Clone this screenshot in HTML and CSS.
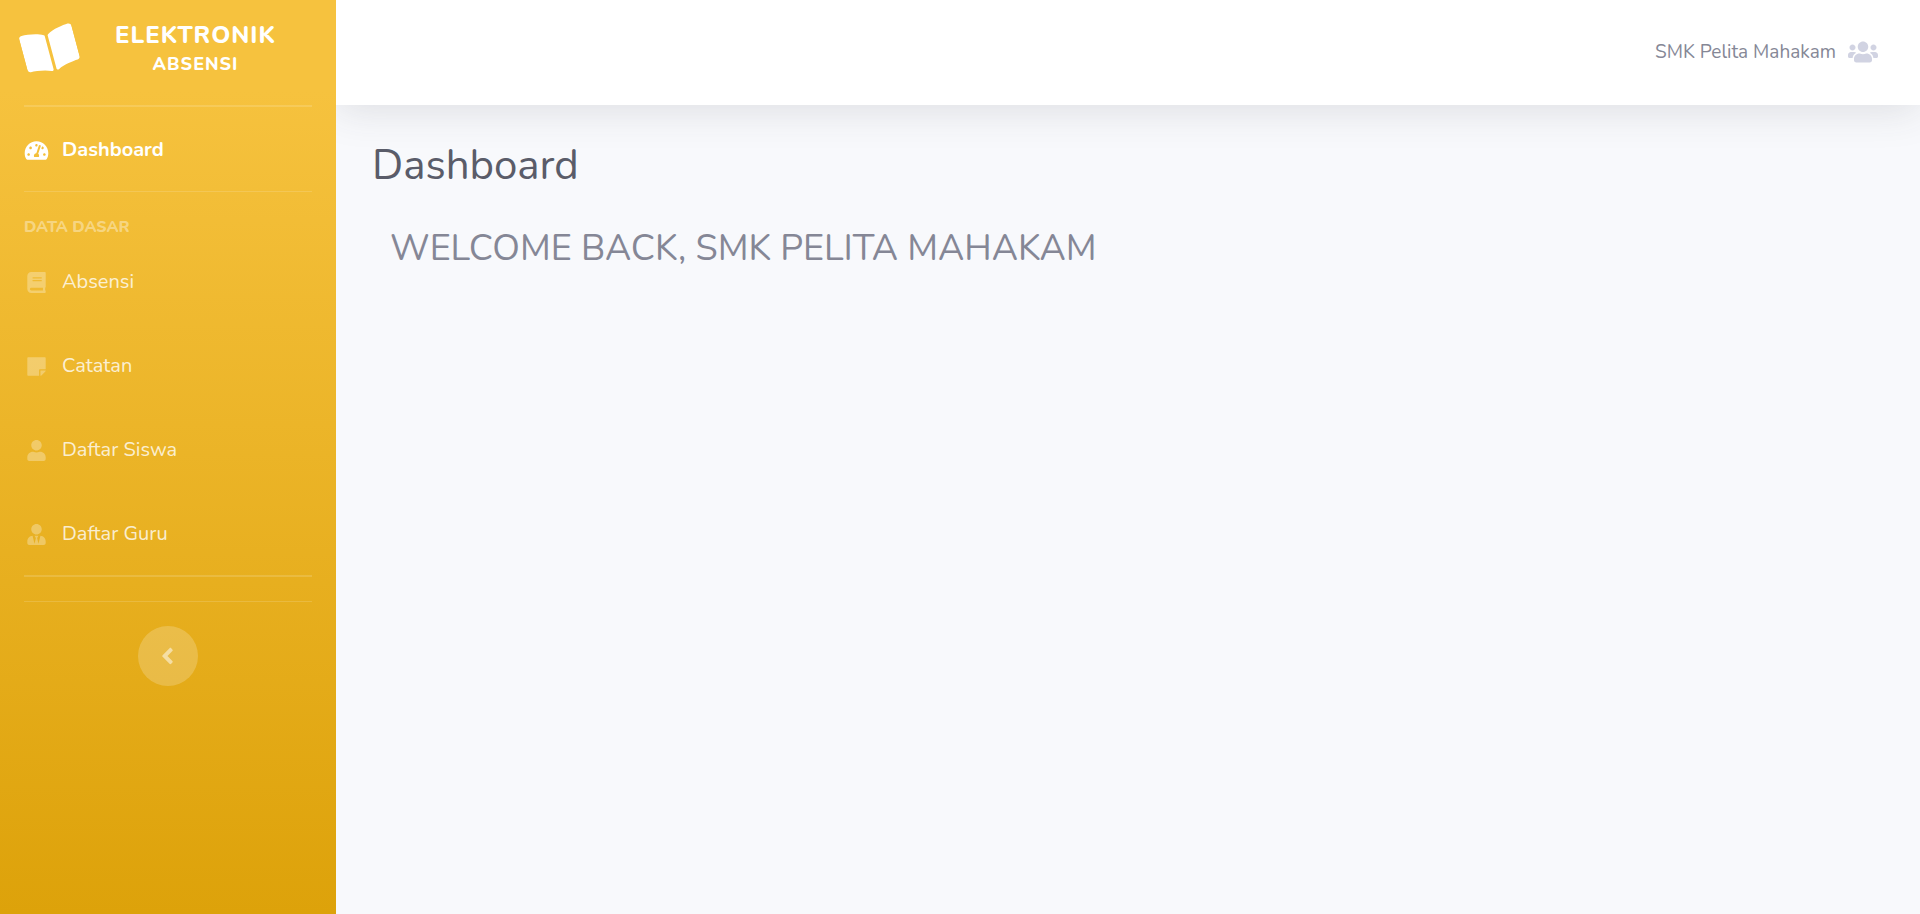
FILE: index.html
```html
<!DOCTYPE html>
<html lang="id">
<head>
<meta charset="utf-8">
<meta name="viewport" content="width=device-width, initial-scale=1">
<title>Elektronik Absensi - Dashboard</title>
<link rel="stylesheet" href="styles.css">
</head>
<body>
<div class="wrapper">
  <nav class="sidebar" aria-label="Menu">
    <a class="brand" href="#">
      <svg class="brand-icon" viewBox="0 0 576 512" aria-hidden="true"><path d="M542.22 32.05c-54.8 3.11-163.72 14.43-230.96 55.59-4.64 2.84-7.27 7.89-7.27 13.17v363.87c0 11.55 12.63 18.85 23.28 13.49 69.18-34.82 169.23-44.32 218.7-46.92 16.89-.89 30.02-14.43 30.02-30.66V62.75c.01-17.71-15.35-31.74-33.77-30.7zM264.73 87.64C197.5 46.48 88.58 35.17 33.78 32.05 15.36 31.01 0 45.04 0 62.75V400.6c0 16.24 13.13 29.78 30.02 30.66 49.49 2.6 149.59 12.11 218.77 46.95 10.62 5.35 23.21-1.94 23.21-13.46V100.63c0-5.29-2.62-10.14-7.27-12.99z"/></svg>
      <span class="brand-text">ELEKTRONIK<small class="brand-sub">ABSENSI</small></span>
    </a>
    <hr class="divider thick">
    <a class="nav-link active" href="#" aria-current="page">
      <svg class="nav-icon" viewBox="0 0 576 512" aria-hidden="true"><path d="M288 32C128.94 32 0 160.94 0 320c0 52.8 14.25 102.26 39.06 144.8 5.61 9.62 16.3 15.2 27.44 15.2h443c11.14 0 21.83-5.58 27.44-15.2C561.75 422.26 576 372.8 576 320c0-159.06-128.94-288-288-288zm0 64c14.71 0 26.58 10.13 30.32 23.65-1.11 2.26-2.64 4.23-3.45 6.67l-9.22 27.67c-5.13 3.49-10.97 6.01-17.64 6.01-17.67 0-32-14.33-32-32S270.33 96 288 96zM96 384c-17.67 0-32-14.33-32-32s14.33-32 32-32 32 14.33 32 32-14.33 32-32 32zm48-160c-17.67 0-32-14.33-32-32s14.33-32 32-32 32 14.33 32 32-14.33 32-32 32zm246.77-72.41l-61.33 184C343.13 347.33 352 364.54 352 384c0 11.72-3.38 22.55-8.88 32H232.88c-5.5-9.45-8.88-20.28-8.88-32 0-33.94 26.5-61.43 59.9-63.59l61.34-184.01c4.17-12.56 17.73-19.45 30.36-15.17 12.57 4.19 19.35 17.79 15.17 30.36zm14.66 57.2l15.52-46.55c3.47-1.29 7.13-2.23 11.05-2.23 17.67 0 32 14.33 32 32s-14.33 32-32 32c-11.38-.01-20.89-6.28-26.57-15.22zM480 384c-17.67 0-32-14.33-32-32s14.33-32 32-32 32 14.33 32 32-14.33 32-32 32z"/></svg>
      <span>Dashboard</span>
    </a>
    <hr class="divider">
    <div class="heading">DATA DASAR</div>
    <a class="nav-link" href="#">
      <svg class="nav-icon" viewBox="0 0 448 512" aria-hidden="true"><path d="M448 360V24c0-13.3-10.7-24-24-24H96C43 0 0 43 0 96v320c0 53 43 96 96 96h328c13.3 0 24-10.7 24-24v-16c0-7.5-3.5-14.3-8.9-18.7-4.2-15.4-4.2-59.3 0-74.7 5.4-4.3 8.9-11.1 8.9-18.6zM128 134c0-3.3 2.7-6 6-6h212c3.3 0 6 2.7 6 6v20c0 3.3-2.7 6-6 6H134c-3.3 0-6-2.7-6-6v-20zm0 64c0-3.3 2.7-6 6-6h212c3.3 0 6 2.7 6 6v20c0 3.3-2.7 6-6 6H134c-3.3 0-6-2.7-6-6v-20zm253.4 250H96c-17.7 0-32-14.3-32-32 0-17.6 14.4-32 32-32h285.4c-1.9 17.1-1.9 46.9 0 64z"/></svg>
      <span>Absensi</span>
    </a>
    <a class="nav-link" href="#">
      <svg class="nav-icon" viewBox="0 0 448 512" aria-hidden="true"><path d="M312 320h136V56c0-13.3-10.7-24-24-24H24C10.7 32 0 42.7 0 56v400c0 13.3 10.7 24 24 24h264V344c0-13.2 10.8-24 24-24zm129 55l-98 98c-4.5 4.5-10.6 7-17 7h-6V352h128v6.1c0 6.3-2.5 12.4-7 16.9z"/></svg>
      <span>Catatan</span>
    </a>
    <a class="nav-link" href="#">
      <svg class="nav-icon" viewBox="0 0 448 512" aria-hidden="true"><path d="M224 256c70.7 0 128-57.3 128-128S294.7 0 224 0 96 57.3 96 128s57.3 128 128 128zm89.6 32h-16.7c-22.2 10.2-46.9 16-72.9 16s-50.6-5.8-72.9-16h-16.7C60.2 288 0 348.2 0 422.4V464c0 26.5 21.5 48 48 48h352c26.5 0 48-21.5 48-48v-41.6c0-74.2-60.2-134.4-134.4-134.4z"/></svg>
      <span>Daftar Siswa</span>
    </a>
    <a class="nav-link" href="#">
      <svg class="nav-icon" viewBox="0 0 448 512" aria-hidden="true"><path d="M224 256c70.7 0 128-57.3 128-128S294.7 0 224 0 96 57.3 96 128s57.3 128 128 128zm95.8 32.6L272 480l-32-136 32-56h-96l32 56-32 136-47.8-191.4C56.9 292 0 350.3 0 422.4V464c0 26.5 21.5 48 48 48h352c26.5 0 48-21.5 48-48v-41.6c0-72.1-56.9-130.4-128.2-133.8z"/></svg>
      <span>Daftar Guru</span>
    </a>
    <hr class="divider thick">
    <hr class="divider spaced">
    <button class="toggle" type="button" aria-label="Ciutkan menu">
      <svg class="toggle-icon" viewBox="0 0 256 512" aria-hidden="true"><path d="M31.7 239l136-136c9.4-9.4 24.6-9.4 33.9 0l22.6 22.6c9.4 9.4 9.4 24.6 0 33.9L127.9 256l96.4 96.4c9.4 9.4 9.4 24.6 0 33.9L201.7 409c-9.4 9.4-24.6 9.4-33.9 0l-136-136c-9.5-9.4-9.5-24.6-.1-34z"/></svg>
    </button>
  </nav>
  <div class="content">
    <header class="topbar">
      <a class="user" href="#">
        <span>SMK Pelita Mahakam</span>
        <svg class="user-icon" viewBox="0 0 640 512" aria-hidden="true"><path d="M96 224c35.3 0 64-28.7 64-64s-28.7-64-64-64-64 28.7-64 64 28.7 64 64 64zm448 0c35.3 0 64-28.7 64-64s-28.7-64-64-64-64 28.7-64 64 28.7 64 64 64zm32 32h-64c-17.6 0-33.5 7.1-45.1 18.6 40.3 22.1 68.9 62 75.1 109.4h66c17.7 0 32-14.3 32-32v-32c0-35.3-28.7-64-64-64zm-256 0c61.9 0 112-50.1 112-112S381.9 32 320 32 208 82.1 208 144s50.1 112 112 112zm76.8 32h-8.3c-20.8 10-43.9 16-68.5 16s-47.6-6-68.5-16h-8.3C179.6 288 128 339.6 128 403.2V432c0 26.5 21.5 48 48 48h288c26.5 0 48-21.5 48-48v-28.8c0-63.6-51.6-115.2-115.2-115.2zm-223.7-13.4C161.5 263.1 145.6 256 128 256H64c-35.3 0-64 28.7-64 64v32c0 17.7 14.3 32 32 32h65.9c6.3-47.4 34.9-87.3 75.2-109.4z"/></svg>
      </a>
    </header>
    <main class="main">
      <h1 class="title">Dashboard</h1>
      <h2 class="welcome">WELCOME BACK, SMK PELITA MAHAKAM</h2>
    </main>
  </div>
</div>
</body>
</html>
```
FILE: styles.css
```css
* { box-sizing: border-box; }

body {
  margin: 0;
  font-family: Nunito, Lato, "Open Sans", sans-serif;
  color: #858796;
  background: #f8f9fc;
}

a { text-decoration: none; }

.wrapper {
  display: flex;
  min-height: 100vh;
}

.sidebar {
  display: flex;
  flex-direction: column;
  flex: 0 0 336px;
  background: linear-gradient(180deg, #f6c23e 10%, #dda20a 100%);
}

.brand {
  display: flex;
  align-items: center;
  height: 105px;
  padding: 0 24px 6px 23px;
  color: #fff;
  font-weight: 800;
}

.brand-icon {
  width: 54px;
  height: 48px;
  fill: currentColor;
  transform: rotate(-15deg);
}

.brand-text {
  flex: 1;
  padding: 0 0 2px 2px;
  font-size: 24px;
  line-height: 30px;
  letter-spacing: 1px;
  text-align: center;
}

.brand-sub {
  display: block;
  font-size: 18px;
  line-height: 28px;
}

.divider {
  width: 288px;
  height: 1px;
  margin: 0 24px;
  border: 0;
  background: rgba(255, 255, 255, .15);
}

.thick { height: 2px; }

.spaced { margin-top: 24px; }

.nav-link {
  display: flex;
  align-items: center;
  gap: 13px;
  height: 84px;
  padding: 2px 24px 0;
  color: rgba(255, 255, 255, .8);
  font-size: 20px;
  line-height: 30px;
}

.nav-icon {
  width: 25px;
  height: 21px;
  fill: rgba(255, 255, 255, .3);
}

.active {
  color: #fff;
  font-weight: 700;
}

.active .nav-icon { fill: #fff; }

.heading {
  padding: 23px 24px 0;
  color: rgba(255, 255, 255, .4);
  font-size: 16px;
  font-weight: 800;
  line-height: 24px;
}

.toggle {
  display: flex;
  align-items: center;
  justify-content: center;
  align-self: center;
  width: 60px;
  height: 60px;
  margin-top: 24px;
  padding: 0 2px 0 0;
  border: 0;
  border-radius: 50%;
  background: rgba(255, 255, 255, .2);
}

.toggle-icon {
  height: 26px;
  fill: rgba(255, 255, 255, .5);
}

.content {
  flex: 1;
  min-width: 0;
  overflow: hidden;
}

.topbar {
  display: flex;
  align-items: center;
  justify-content: flex-end;
  height: 105px;
  padding: 0 42px 2px;
  background: #fff;
  box-shadow: 0 4px 42px rgba(58, 59, 69, .15);
}

.user {
  display: flex;
  align-items: center;
  gap: 12px;
  color: #858796;
  font-size: 19px;
  line-height: 30px;
}

.user-icon {
  width: 30px;
  height: 24px;
  fill: #d1d3e2;
}

.main { padding: 36px; }

.title {
  margin: 0;
  color: #5a5c69;
  font-size: 42px;
  font-weight: 400;
  line-height: 50px;
}

.welcome {
  margin: 36px 18px 0;
  font-size: 36px;
  font-weight: 400;
  line-height: 44px;
}
```
